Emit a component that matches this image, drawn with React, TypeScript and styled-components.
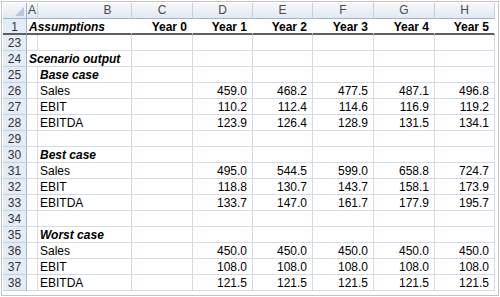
import React from "react";
import styled, { createGlobalStyle } from "styled-components";

const GlobalStyle = createGlobalStyle`
  html, body {
    margin: 0;
    padding: 0;
    background: #fff;
  }
  body {
    font-family: "Liberation Sans", Arial, sans-serif;
  }
`;

const Frame = styled.div`
  width: 500px;
  height: 297px;
  box-sizing: border-box;
  padding: 1px;
`;

const Border = styled.div`
  height: 100%;
  box-sizing: border-box;
  border: 1px solid #c4c4c4;
  padding: 1px 0 0 1px;
  background: #fff;
`;

const Sheet = styled.div`
  display: grid;
  grid-template-columns: 24px 11px 94px 61px 60px 60px 61px 61px 60px;
  grid-auto-rows: 16px;
  font-size: 12px;
  color: #000;
`;

const Corner = styled.div`
  position: relative;
  box-sizing: border-box;
  background: linear-gradient(#f6f8fb, #e3e9f1);
  border-right: 1px solid #9eb6ce;
  border-bottom: 1px solid #9eb6ce;
  &::after {
    content: "";
    position: absolute;
    right: 2px;
    bottom: 2px;
    border-style: solid;
    border-width: 0 0 9px 9px;
    border-color: transparent transparent #b9c7d9 transparent;
  }
`;

const ColHead = styled.div<{ $shift?: number }>`
  box-sizing: border-box;
  background: linear-gradient(#f6f8fb, #e3e9f1);
  border-right: 1px solid #c5d1df;
  border-bottom: 1px solid #9eb6ce;
  color: #4a4a4a;
  line-height: 15px;
  text-align: center;
  padding-left: ${(p) => p.$shift ?? 0}px;
  &:last-child {
    border-right-color: #c5d1df;
  }
`;

const RowHead = styled.div<{ $thick?: boolean }>`
  box-sizing: border-box;
  background: #e4ecf7;
  border-right: 1px solid #9eb6ce;
  border-bottom: ${(p) => (p.$thick ? "2px solid #5e5e5e" : "1px solid #c5d1df")};
  color: #333;
  line-height: ${(p) => (p.$thick ? "14px" : "15px")};
  padding-top: 1px;
  text-align: center;
`;

const Cell = styled.div<{
  $right?: boolean;
  $strong?: boolean;
  $italic?: boolean;
  $span?: number;
  $bare?: boolean;
  $thick?: boolean;
}>`
  box-sizing: border-box;
  grid-column: span ${(p) => p.$span ?? 1};
  border-right: 1px solid ${(p) => (p.$bare ? "transparent" : "#d4dbe6")};
  border-bottom: ${(p) => (p.$thick ? "2px solid #5e5e5e" : "1px solid #d4dbe6")};
  padding: 1px ${(p) => (p.$right ? "5px" : "0")} 0 ${(p) => (p.$right ? "0" : "2px")};
  line-height: ${(p) => (p.$thick ? "14px" : "15px")};
  text-align: ${(p) => (p.$right ? "right" : "left")};
  font-weight: ${(p) => (p.$strong ? 700 : 400)};
  font-style: ${(p) => (p.$italic ? "italic" : "normal")};
  white-space: nowrap;
  overflow: hidden;
`;

type Line = { label: string; values: string[] };
type Block = { title: string; lines: Line[] };

const blocks: Block[] = [
  {
    title: "Base case",
    lines: [
      { label: "Sales", values: ["459.0", "468.2", "477.5", "487.1", "496.8"] },
      { label: "EBIT", values: ["110.2", "112.4", "114.6", "116.9", "119.2"] },
      { label: "EBITDA", values: ["123.9", "126.4", "128.9", "131.5", "134.1"] },
    ],
  },
  {
    title: "Best case",
    lines: [
      { label: "Sales", values: ["495.0", "544.5", "599.0", "658.8", "724.7"] },
      { label: "EBIT", values: ["118.8", "130.7", "143.7", "158.1", "173.9"] },
      { label: "EBITDA", values: ["133.7", "147.0", "161.7", "177.9", "195.7"] },
    ],
  },
  {
    title: "Worst case",
    lines: [
      { label: "Sales", values: ["450.0", "450.0", "450.0", "450.0", "450.0"] },
      { label: "EBIT", values: ["108.0", "108.0", "108.0", "108.0", "108.0"] },
      { label: "EBITDA", values: ["121.5", "121.5", "121.5", "121.5", "121.5"] },
    ],
  },
];

const letters = ["C", "D", "E", "F", "G", "H"];

const EmptyRow = ({ n }: { n: number }) => (
  <>
    <RowHead>{n}</RowHead>
    {Array.from({ length: 8 }).map((_, i) => (
      <Cell key={i} />
    ))}
  </>
);

export default function App() {
  const rows: React.ReactNode[] = [];
  let n = 25;
  blocks.forEach((b, bi) => {
    if (bi > 0) {
      rows.push(<EmptyRow key={`e${n}`} n={n} />);
      n++;
    }
    rows.push(
      <React.Fragment key={`t${n}`}>
        <RowHead>{n}</RowHead>
        <Cell />
        <Cell $strong $italic>
          {b.title}
        </Cell>
        {Array.from({ length: 6 }).map((_, i) => (
          <Cell key={i} />
        ))}
      </React.Fragment>
    );
    n++;
    b.lines.forEach((l) => {
      rows.push(
        <React.Fragment key={`l${n}`}>
          <RowHead>{n}</RowHead>
          <Cell />
          <Cell>{l.label}</Cell>
          <Cell />
          {l.values.map((v, i) => (
            <Cell key={i} $right>
              {v}
            </Cell>
          ))}
        </React.Fragment>
      );
      n++;
    });
  });

  return (
    <>
      <GlobalStyle />
      <Frame>
        <Border>
          <Sheet>
            <Corner />
            <ColHead>A</ColHead>
            <ColHead $shift={46}>B</ColHead>
            {letters.map((l) => (
              <ColHead key={l}>{l}</ColHead>
            ))}

            <RowHead $thick>1</RowHead>
            <Cell $span={2} $strong $italic $bare $thick>
              Assumptions
            </Cell>
            {["Year 0", "Year 1", "Year 2", "Year 3", "Year 4", "Year 5"].map((y) => (
              <Cell key={y} $right $strong $bare $thick>
                {y}
              </Cell>
            ))}

            <EmptyRow n={23} />

            <RowHead>24</RowHead>
            <Cell $span={2} $strong $italic>
              Scenario output
            </Cell>
            {Array.from({ length: 6 }).map((_, i) => (
              <Cell key={i} />
            ))}

            {rows}
          </Sheet>
        </Border>
      </Frame>
    </>
  );
}
